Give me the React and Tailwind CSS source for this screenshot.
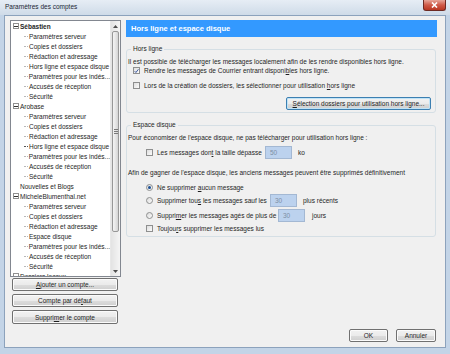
import React from "react";

const tree = [
  { label: "Sébastien", top: true, open: true, bold: true },
  { label: "Paramètres serveur" },
  { label: "Copies et dossiers" },
  { label: "Rédaction et adressage" },
  { label: "Hors ligne et espace disque" },
  { label: "Paramètres pour les indés..." },
  { label: "Accusés de réception" },
  { label: "Sécurité" },
  { label: "Arobase", top: true, open: true },
  { label: "Paramètres serveur" },
  { label: "Copies et dossiers" },
  { label: "Rédaction et adressage" },
  { label: "Hors ligne et espace disque", selected: true },
  { label: "Paramètres pour les indés..." },
  { label: "Accusés de réception" },
  { label: "Sécurité" },
  { label: "Nouvelles et Blogs", top: true },
  { label: "MicheleBlumenthal.net", top: true, open: true },
  { label: "Paramètres serveur" },
  { label: "Copies et dossiers" },
  { label: "Rédaction et adressage" },
  { label: "Espace disque" },
  { label: "Paramètres pour les indés..." },
  { label: "Accusés de réception" },
  { label: "Sécurité" },
  { label: "Dossiers locaux", top: true, open: true },
];

const U = ({ children }) => <span className="underline underline-offset-1">{children}</span>;

const Button = ({ children, focused, className = "" }) => (
  <div
    className={`flex items-center justify-center h-[13px] rounded-[2px] border bg-[linear-gradient(#f2f2f2_0%,#ebebeb_50%,#dddddd_51%,#cfcfcf_100%)] ${
      focused
        ? "border-[#3c7fb1] shadow-[inset_0_0_0_1px_#bfe3f7]"
        : "border-[#707070] shadow-[inset_0_0_0_1px_#fbfbfb]"
    } ${className}`}
  >
    {children}
  </div>
);

const Checkbox = ({ checked }) => (
  <span className="w-[7px] h-[7px] shrink-0 border border-[#8e8f8f] bg-[linear-gradient(135deg,#dedede,#fbfbfb)] flex items-center justify-center">
    {checked && (
      <svg width="6" height="6" viewBox="0 0 6 6">
        <path d="M0.8 3.2 L2.3 4.8 L5.3 0.9" fill="none" stroke="#3d5aa0" strokeWidth="1.2" />
      </svg>
    )}
  </span>
);

const Radio = ({ checked }) => (
  <span className="w-[7px] h-[7px] shrink-0 rounded-full border border-[#8e8f8f] bg-[linear-gradient(135deg,#dcdcdc,#fbfbfb)] flex items-center justify-center">
    {checked && <span className="w-[3px] h-[3px] rounded-full bg-[#1b4f94]" />}
  </span>
);

const Field = ({ value }) => (
  <div className="w-[27px] h-[13px] shrink-0 border border-[#a3b8d3] bg-[#bcd2ee] text-[#7d8ea5] pl-[4px] flex items-center">
    {value}
  </div>
);

const Arrow = ({ down }) => (
  <svg width="5" height="3" viewBox="0 0 5 3">
    <path d={down ? "M0 0 H5 L2.5 3 Z" : "M0 3 H5 L2.5 0 Z"} fill="#4d4d4d" />
  </svg>
);

const Scrollbar = () => (
  <div className="w-[10px] h-full flex flex-col bg-[linear-gradient(90deg,#e3e3e3,#f5f5f5)] border-l border-[#e8e8e8]">
    <div className="h-[10px] flex items-center justify-center">
      <Arrow />
    </div>
    <div className="h-[201px] mx-[1px] rounded-[2px] border border-[#979797] bg-[linear-gradient(90deg,#f4f4f4,#e6e6e6_50%,#d4d4d4)] flex flex-col items-center justify-center gap-[1px]">
      <span className="w-[4px] h-px bg-[#7a7a7a]" />
      <span className="w-[4px] h-px bg-[#7a7a7a]" />
      <span className="w-[4px] h-px bg-[#7a7a7a]" />
    </div>
    <div className="flex-1" />
    <div className="h-[10px] flex items-center justify-center">
      <Arrow down />
    </div>
  </div>
);

const Tree = () => (
  <div className="h-[257px] border border-[#828790] bg-white flex overflow-hidden">
    <div className="flex-1 overflow-hidden">
      {tree.map((item, i) =>
        item.top ? (
          <div key={i} className="h-[10px] flex items-center pl-[2px] whitespace-nowrap">
            {item.open ? (
              <span className="w-[6px] h-[6px] border border-[#919191] bg-white flex items-center justify-center mr-[1px]">
                <span className="w-[4px] h-px bg-[#333]" />
              </span>
            ) : (
              <span className="w-[7px]" />
            )}
            <span className={item.bold ? "font-bold" : ""}>{item.label}</span>
          </div>
        ) : (
          <div key={i} className="h-[10px] flex items-center whitespace-nowrap">
            <span
              className={`ml-[13px] mr-[1px] w-[4px] border-t border-dotted ${
                item.selected ? "border-[#555]" : "border-[#b9b9b9]"
              }`}
            />
            <span>{item.label}</span>
          </div>
        )
      )}
    </div>
    <Scrollbar />
  </div>
);

const GroupBox = ({ title, children, className = "" }) => (
  <fieldset className={`border border-[#d5dfe5] rounded-[3px] pl-[1px] mr-[1px] ${className}`}>
    <legend className="ml-[3px] px-[2px] leading-[8px]">{title}</legend>
    {children}
  </fieldset>
);

export default function App() {
  return (
    <div className="w-[450px] h-[354px] overflow-hidden flex flex-col bg-[#c3d4e7] text-[6.5px] leading-[9px] text-[#1e1e1e] font-['Liberation_Sans',Arial,sans-serif]">
      {/* title bar */}
      <div className="h-[15px] shrink-0 flex items-start justify-between bg-[linear-gradient(#e6edf5,#cfdbe8)]">
        <span className="pl-[5px] pt-[3px] leading-[8px] text-[#1b2635]">Paramètres des comptes</span>
        <div className="w-[23px] h-[11px] mr-[4px] rounded-b-[3px] border border-t-0 border-[#6d2a23] bg-[linear-gradient(#e7a699,#cf5a48_50%,#b93722)] flex items-center justify-center">
          <svg width="7" height="6" viewBox="0 0 7 6">
            <path d="M1 0.5 L6 5.5 M6 0.5 L1 5.5" stroke="#fff" strokeWidth="1.6" />
          </svg>
        </div>
      </div>

      {/* client area */}
      <div className="mx-[4px] h-[333px] shrink-0 border border-[#8ca2bc] bg-[#f0f0f0] pt-[4px] pl-[5px] pr-[8px] flex gap-[5px]">
        {/* left column */}
        <div className="w-[111px] flex flex-col">
          <Tree />
          <div className="mt-[1px] px-[2px] flex flex-col gap-[3px] w-[110px]">
            <Button>
              <U>A</U>jouter un compte...
            </Button>
            <Button>
              Compte par dé<U>f</U>aut
            </Button>
            <Button className="h-[14px]">
              Suppri<U>m</U>er le compte
            </Button>
          </div>
        </div>

        {/* right column */}
        <div className="w-[311px] flex flex-col pb-[5px]">
          <div className="h-[17px] shrink-0 bg-[#3399ff] text-white font-bold text-[7.5px] pl-[5px] flex items-center">
            Hors ligne et espace disque
          </div>

          <GroupBox title="Hors ligne" className="mt-[8px] pb-[2px]">
            <div className="pt-[4px]">
              Il est possible de télécharger les messages localement afin de les rendre disponibles hors ligne.
            </div>
            <div className="h-[9px] flex items-center gap-[4px] pl-[5px]">
              <Checkbox checked />
              <span>
                Rendre les messages de Courrier entrant disponi<U>b</U>les hors ligne.
              </span>
            </div>
            <div className="mt-[6px] h-[9px] flex items-center gap-[4px] pl-[5px]">
              <Checkbox />
              <span>
                Lors de la création de dossiers, les sélectionner pour utilisation <U>h</U>ors ligne
              </span>
            </div>
            <div className="mt-[7px] flex justify-end pr-[4px]">
              <Button focused className="w-[145px]">
                <span>
                  <U>S</U>élection dossiers pour utilisation hors ligne...
                </span>
              </Button>
            </div>
          </GroupBox>

          <GroupBox title="Espace disque" className="mt-[8px] pb-[1px]">
            <div className="pt-[4px]">
              Pour économiser de l'espace disque, ne pas télécharger pour utilisation hors ligne :
            </div>
            <div className="mt-[4px] h-[13px] flex items-center pl-[18px]">
              <Checkbox />
              <span className="ml-[4px] w-[108px]">
                Les messages don<U>t</U> la taille dépasse
              </span>
              <Field value="50" />
              <span className="ml-[6px]">ko</span>
            </div>
            <div className="mt-[9px]">
              Afin de gagner de l'espace disque, les anciens messages peuvent être supprimés définitivement
            </div>
            <div className="mt-[4px] h-[13px] flex items-center pl-[18px]">
              <Radio checked />
              <span className="ml-[4px]">
                Ne supprimer <U>a</U>ucun message
              </span>
            </div>
            <div className="h-[13px] flex items-center pl-[18px]">
              <Radio />
              <span className="ml-[4px] w-[113px]">
                Supprimer tou<U>s</U> les messages sauf les
              </span>
              <Field value="30" />
              <span className="ml-[6px]">plus récents</span>
            </div>
            <div className="mt-[2px] h-[13px] flex items-center pl-[18px]">
              <Radio />
              <span className="ml-[4px] w-[121px]">
                Suppri<U>m</U>er les messages agés de plus de
              </span>
              <Field value="30" />
              <span className="ml-[7px]">jours</span>
            </div>
            <div className="h-[13px] flex items-center pl-[18px]">
              <Checkbox />
              <span className="ml-[4px]">
                Toujou<U>r</U>s supprimer les messages lus
              </span>
            </div>
          </GroupBox>

          <div className="flex-1" />
          <div className="flex justify-end gap-[8px] pr-[1px]">
            <Button className="w-[39px]">OK</Button>
            <Button className="w-[40px]">Annuler</Button>
          </div>
        </div>
      </div>
    </div>
  );
}
